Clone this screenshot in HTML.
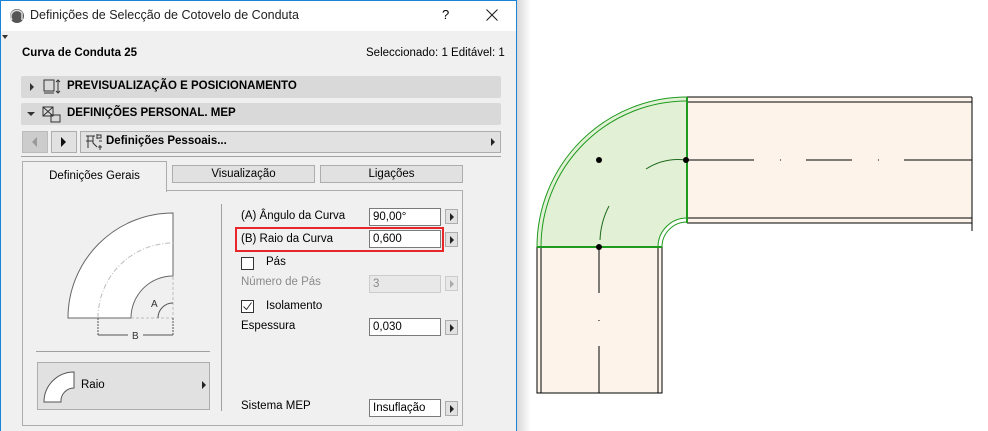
<!DOCTYPE html>
<html><head><meta charset="utf-8"><style>
*{margin:0;padding:0;box-sizing:border-box}
body{width:988px;height:431px;background:#fff;position:relative;overflow:hidden;font-family:"Liberation Sans",sans-serif;font-size:11.5px;color:#000}
.a{position:absolute}
.win{left:0;top:0;width:517px;height:431px;background:#f0f0f0;border:1px solid #1883d7;border-bottom:none}
.bar{background:#d9d9d9;border-radius:2px;font-weight:bold}
.inp{background:#fff;border:1px solid #7a7a7a;padding:2px 3px;height:18px}
.btn{background:#e1e1e1;border:1px solid #adadad;width:13px;height:15px}
.tri{width:0;height:0;border-top:4px solid transparent;border-bottom:4px solid transparent;border-left:4px solid #222;position:absolute;left:4px;top:3px}
.tab{border:1px solid #adadad;background:#e1e1e1;text-align:center}
</style></head><body>
<div class="a win"></div>
<div class="a" style="left:1px;top:1px;width:515px;height:30px;background:#fff"></div>
<svg class="a" style="left:9px;top:8px" width="16" height="16"><circle cx="8" cy="8" r="7" fill="#555"/><path d="M3 12 A6 6 0 0 1 13 5 L13 12" fill="none" stroke="#ddd" stroke-width="1.5"/></svg>
<div class="a" style="left:30px;top:8px;font-size:12.5px;color:#222">Definições de Selecção de Cotovelo de Conduta</div>
<div class="a" style="left:442px;top:7px;font-size:13px">?</div>
<svg class="a" style="left:486px;top:9px" width="12" height="12"><path d="M0.5 0.5L11.5 11.5M11.5 0.5L0.5 11.5" stroke="#222" stroke-width="1.1"/></svg>
<div class="a" style="left:2px;top:35px;border-left:3px solid transparent;border-right:3px solid transparent;border-top:4px solid #333"></div>
<div class="a" style="left:22px;top:47px;font-weight:bold">Curva de Conduta 25</div>
<div class="a" style="left:366px;top:47px">Seleccionado: 1 Editável: 1</div>
<div class="a bar" style="left:21px;top:76px;width:480px;height:22px"></div>
<div class="a" style="left:30px;top:83px;border-top:4px solid transparent;border-bottom:4px solid transparent;border-left:4px solid #333"></div>
<svg class="a" style="left:42px;top:78px" width="20" height="18"><rect x="2" y="2" width="10" height="11" fill="none" stroke="#333"/><path d="M2 15h10M16 2v13M14 4l2-2 2 2M14 13l2 2 2-2" stroke="#333" fill="none"/></svg>
<div class="a" style="left:67px;top:80px;font-weight:bold">PREVISUALIZAÇÃO E POSICIONAMENTO</div>
<div class="a bar" style="left:21px;top:103px;width:480px;height:22px"></div>
<div class="a" style="left:27px;top:112px;border-left:4px solid transparent;border-right:4px solid transparent;border-top:4px solid #333"></div>
<svg class="a" style="left:42px;top:105px" width="20" height="18"><rect x="1" y="2" width="10" height="9" fill="none" stroke="#333"/><path d="M1 2l10 9M11 2l-10 9" stroke="#333"/><rect x="9" y="10" width="9" height="7" fill="none" stroke="#333"/></svg>
<div class="a" style="left:67px;top:107px;font-weight:bold">DEFINIÇÕES PERSONAL. MEP</div>
<div class="a" style="left:22px;top:131px;width:26px;height:22px;background:#ccc;border:1px solid #bbb"></div>
<div class="a" style="left:32px;top:137px;border-top:5px solid transparent;border-bottom:5px solid transparent;border-right:5px solid #999"></div>
<div class="a" style="left:51px;top:131px;width:26px;height:22px;background:#e1e1e1;border:1px solid #adadad"></div>
<div class="a" style="left:61px;top:137px;border-top:5px solid transparent;border-bottom:5px solid transparent;border-left:5px solid #111"></div>
<div class="a" style="left:80px;top:131px;width:421px;height:22px;background:#e1e1e1;border:1px solid #adadad"></div>
<svg class="a" style="left:85px;top:133px" width="18" height="18"><path d="M1 3h9M3 3v12M8 3v7l4 4M1 8h7M12 1v5M14 8h3M15 12v5M13 14h4" stroke="#333" fill="none"/><rect x="12" y="2" width="4" height="3" fill="none" stroke="#333"/></svg>
<div class="a" style="left:106px;top:135px;font-weight:bold">Definições Pessoais...</div>
<div class="a" style="left:491px;top:138px;border-top:4px solid transparent;border-bottom:4px solid transparent;border-left:4px solid #222"></div>
<div class="a" style="left:21px;top:156px;width:480px;height:1px;background:#a0a0a0"></div>
<div class="a" style="left:22px;top:190px;width:441px;height:236px;border:1px solid #adadad"></div>
<div class="a" style="left:22px;top:161px;width:145px;height:31px;border:1px solid #adadad;border-bottom:none;background:#f0f0f0;text-align:center;padding-top:8px">Definições Gerais</div>
<div class="a tab" style="left:172px;top:165px;width:143px;height:18px;padding-top:2px">Visualização</div>
<div class="a tab" style="left:320px;top:165px;width:143px;height:18px;padding-top:2px">Ligações</div>
<svg class="a" style="left:55px;top:205px" width="130" height="140">
<path d="M13 113 A105 105 0 0 1 118 8 V71 A42 42 0 0 0 76 113 Z" fill="#fff" stroke="#666"/>
<path d="M43 113 A75 75 0 0 1 118 38" fill="none" stroke="#bbb" stroke-dasharray="5,2,1,2"/>
<path d="M76 113H118V71" fill="none" stroke="#bbb" stroke-dasharray="3,2"/>
<path d="M103 113A15 15 0 0 1 118 98" fill="none" stroke="#555"/>
<text x="96" y="102" font-size="10" font-family="Liberation Sans" fill="#333">A</text>
<path d="M43 113V130M118 113V130" stroke="#555" stroke-dasharray="2,1" fill="none"/>
<path d="M43 130H73M88 130H118" stroke="#555"/>
<text x="77" y="134" font-size="10" font-family="Liberation Sans" fill="#333">B</text>
</svg>
<div class="a" style="left:36px;top:351px;width:174px;height:1px;background:#a0a0a0"></div>
<div class="a" style="left:37px;top:362px;width:173px;height:48px;background:#e1e1e1;border:1px solid #adadad"></div>
<svg class="a" style="left:43px;top:370px" width="32" height="34"><path d="M1 32 A30 30 0 0 1 31 2 V18 A13 13 0 0 0 18 32Z" fill="#fff" stroke="#555"/></svg>
<div class="a" style="left:81px;top:379px">Raio</div>
<div class="a" style="left:202px;top:381px;border-top:4px solid transparent;border-bottom:4px solid transparent;border-left:4px solid #222"></div>
<div class="a" style="left:221px;top:204px;width:1px;height:207px;background:#a0a0a0"></div>
<div class="a" style="left:241px;top:210px">(A) Ângulo da Curva</div>
<div class="a inp" style="left:369px;top:208px;width:72px">90,00°</div>
<div class="a btn" style="left:445px;top:209px"><div class="tri"></div></div>
<div class="a" style="left:235px;top:227px;width:209px;height:25px;border:2px solid #e8262a"></div>
<div class="a" style="left:241px;top:233px">(B) Raio da Curva</div>
<div class="a inp" style="left:369px;top:230px;width:72px">0,600</div>
<div class="a btn" style="left:445px;top:232px"><div class="tri"></div></div>
<div class="a" style="left:241px;top:257px;width:13px;height:13px;border:1px solid #333;background:#fff"></div>
<div class="a" style="left:266px;top:256px">Pás</div>
<div class="a" style="left:241px;top:276px;color:#8a8a8a">Número de Pás</div>
<div class="a inp" style="left:369px;top:275px;width:72px;background:#e8e8e8;border-color:#ccc;color:#888">3</div>
<div class="a btn" style="left:445px;top:276px;background:#e8e8e8;border-color:#ccc"><div class="tri" style="border-left-color:#aaa"></div></div>
<svg class="a" style="left:241px;top:300px" width="13" height="13"><rect x="0.5" y="0.5" width="12" height="12" fill="#fff" stroke="#333"/><path d="M2.5 6.5l3 3 5-7" stroke="#333" fill="none"/></svg>
<div class="a" style="left:266px;top:300px">Isolamento</div>
<div class="a" style="left:241px;top:320px">Espessura</div>
<div class="a inp" style="left:369px;top:318px;width:72px">0,030</div>
<div class="a btn" style="left:445px;top:320px"><div class="tri"></div></div>
<div class="a" style="left:241px;top:400px">Sistema MEP</div>
<div class="a inp" style="left:369px;top:399px;width:72px">Insuflação</div>
<div class="a btn" style="left:445px;top:401px"><div class="tri"></div></div>
<div class="a" style="left:517px;top:0;width:14px;height:431px;background:linear-gradient(to right,#d8d8d8,#fff)"></div>
<svg class="a" style="left:0;top:0" width="988" height="431">
<rect x="687" y="97" width="285" height="126" fill="#fdf3ea"/>
<rect x="537" y="247" width="125" height="146" fill="#fdf3ea"/>
<path d="M687 97H972M687 102H972M687 218H972M687 223H972M972 97V231" stroke="#000" fill="none"/>
<path d="M537 247V393H662V247M541 247V393M658 247V393" stroke="#000" fill="none"/>
<path d="M537 247 A150 150 0 0 1 687 97 V218 A29 29 0 0 0 658 247Z" fill="#e2f0d5"/>
<path d="M537 247 A150 150 0 0 1 687 97 M541 247 A146 146 0 0 1 687 101 M662 247 A25 25 0 0 1 687 222 M658 247 A29 29 0 0 1 687 218" stroke="#1e9a1e" fill="none"/>
<path d="M537 247H662M687 97V223" stroke="#1e9a1e" stroke-width="2"/>
<path d="M687 160H754M806 160H852M904 160H972M780 160h1M878 160h1" stroke="#000"/>
<path d="M599 247V293M599 346V393M599 320v1" stroke="#000"/>
<path d="M646 169 A60 60 0 0 1 686 160M600 240 A80 80 0 0 1 609 206" stroke="#1e6a1e" fill="none"/>
<circle cx="599" cy="160" r="3"/><circle cx="686" cy="160" r="3"/><circle cx="599" cy="247" r="3"/>
</svg>
</body></html>
